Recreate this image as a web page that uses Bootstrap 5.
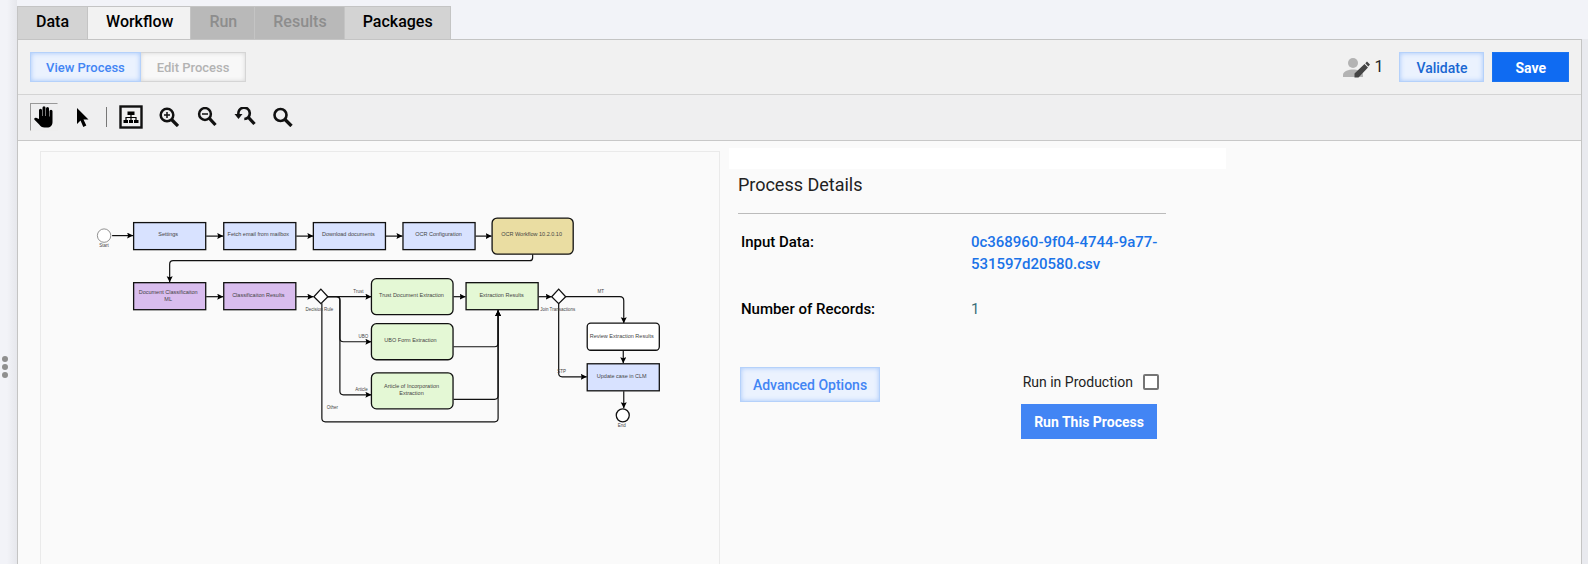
<!DOCTYPE html>
<html lang="en">
<head>
<meta charset="utf-8">
<meta name="viewport" content="width=device-width, initial-scale=1">
<title>Workflow</title>
<link href="https://cdn.jsdelivr.net/npm/bootstrap@5.3.0/dist/css/bootstrap.min.css" rel="stylesheet">
<script src="https://cdn.jsdelivr.net/npm/bootstrap@5.3.0/dist/js/bootstrap.bundle.min.js"></script>
<style>
body{font-family:Roboto,"Liberation Sans",sans-serif;background:#f2f3f8;color:#000;font-size:15px;line-height:22px}
.gutter{width:17px;background:linear-gradient(90deg,#f2f3f8 40%,#e6e7ec)}
.edge{width:6px;background:#e9eaef;margin-top:39px}
.grip{gap:2px;padding:356px 2px 0}
.grip span{width:6px;height:6px;border-radius:50%;background:#8f8f8f}
.mode-tabs{padding-top:6px}
.mode-tabs .nav-link{border:1px solid #c4c4c4;border-bottom:0;border-radius:0;background:#d3d3d3;color:#000;font-size:16px;font-weight:500;line-height:24px;padding:3px 18px 5px;height:33px}
.mode-tabs .nav-item+.nav-item .nav-link{border-left:0;padding:3px 17px 5px 18px}
.mode-tabs .nav-link.active{background:#f2f2f2;color:#000}
.mode-tabs .nav-link.disabled{background:#b9b9b9;color:#8d8d8d}
.workpanel{border:1px solid #c4c4c4;border-bottom:0;background:#fafafa}
.headbar{background:#f1f1f1;border-bottom:1px solid #d4d4d4;padding:12px}
.toolstrip{background:#efeff0;border-bottom:1px solid #c8c8c8;padding:8px 12px 9px;gap:10px}
.pbtn{border-radius:0;font-size:14px;font-weight:500;line-height:20px;padding:5px 16px 3px;height:30px;border:1px solid #b5d1fa;color:#4285f4;background:#ebf2fe;box-shadow:inset 0 0 5px #a5c7fb}
.seg .pbtn{font-size:13px;padding:5px 15px 3px}
.seg .pbtn:disabled{opacity:1;color:#b3b3b3;background:#f8f8f8;border-color:#d5d5d5;border-left:0;padding:5px 16px 3px;box-shadow:inset 0 0 4px #d5d5d5}
.pbtn.deep{color:#1967d2}
.pbtn.solid{background:#0f6bf2;border-color:#1a73f0;color:#fff;font-weight:700;box-shadow:none;padding:5px 22px 3px}
.pbtn.run{background:#4285f4;border-color:#4285f4;color:#fff;font-weight:700;box-shadow:none}
.pbtn.tall{height:35px;padding:7px 12px 6px}
.tool{width:28px;height:28px;border:1px solid transparent;background:none;padding:0;display:flex;align-items:center;justify-content:center}
.tool.on{border-color:#999 #eee #eee #999}
.sep{width:1px;height:20px;background:#777}
.canvas{width:43.5%;margin:10px 0 0 22px;border:1px solid #eaeaea;border-bottom:0}
.details{width:497px;margin:7px 0 0 9px}
.strip{height:21px;background:#fff}
.inner{width:428px;margin-left:9px}
.ptitle{font-size:18px;line-height:24px;font-weight:400;margin:4px 0 0;color:#222}
.inner hr{margin:16px 0 0;border-top:1px solid #bbb;opacity:1}
.facts{margin:17px 0 0 3px}
.facts dt{width:230px;font-weight:500}
.facts dd,.facts dt{margin-bottom:23px}
.facts dd{width:190px}
.facts a{color:#1a73e8;text-decoration:none;font-weight:500}
.facts .count{color:#3a6f78}
.actions{margin:24px 9px 0 2px}
.prod{gap:10px;height:30px;margin-bottom:7px;margin-right:-2px;font-size:14px;color:#222}
.prod input{width:16px;height:16px;margin:0;appearance:none;border:2px solid #757575;border-radius:2px;background:#fff}
.flow text{font-family:"Liberation Sans",sans-serif;font-size:11px;text-anchor:middle;fill:#444;stroke:none}
.flow .lb{font-size:9px}
.flow .nodes{stroke:#111;stroke-width:1.3}
.flow .wire{fill:none;stroke:#111;stroke-width:1.2}
</style>
</head>
<body class="d-flex min-vh-100">
<aside class="gutter flex-shrink-0"><div class="grip d-flex flex-column"><span></span><span></span><span></span></div></aside>
<main class="flex-grow-1 d-flex flex-column min-vh-100">
  <ul class="nav mode-tabs">
    <li class="nav-item"><a class="nav-link" href="#">Data</a></li>
    <li class="nav-item"><a class="nav-link active" href="#" aria-current="page">Workflow</a></li>
    <li class="nav-item"><a class="nav-link disabled" href="#" aria-disabled="true">Run</a></li>
    <li class="nav-item"><a class="nav-link disabled" href="#" aria-disabled="true">Results</a></li>
    <li class="nav-item"><a class="nav-link" href="#">Packages</a></li>
  </ul>
  <section class="workpanel flex-grow-1 d-flex flex-column">
    <div class="headbar d-flex align-items-center justify-content-between">
      <div class="seg d-flex"><button type="button" class="btn pbtn">View Process</button><button type="button" class="btn pbtn" disabled>Edit Process</button></div>
      <div class="d-flex align-items-center">
        <svg width="27" height="22" viewBox="0 0 27 22" class="me-1" aria-hidden="true"><circle cx="10" cy="7" r="5" fill="#b3b3b3"/><path d="M0 21v-2c0-4 6-5.500 10-5.500s10 1.500 10 5.500v2z" fill="#b3b3b3"/><path d="M11.500 21.500v-4L21.500 8l3.500 3.500L15.500 21.500zM22.300 7.200l1.700-1.700 3 3-1.700 1.900z" fill="#444"/></svg>
        <span class="fs-6 me-3 text-dark">1</span>
        <button type="button" class="btn pbtn deep">Validate</button>
        <button type="button" class="btn pbtn solid ms-2">Save</button>
      </div>
    </div>
    <div class="toolstrip d-flex align-items-center">
      <button type="button" class="tool on" aria-label="Pan"><svg width="22" height="24" viewBox="0 0 22 24" fill="#000"><path d="M6 14V5.200a1.500 1.500 0 0 1 3 0V11h.5V2.700a1.500 1.500 0 0 1 3 0V11h.5V3.500a1.500 1.500 0 0 1 3 0V11.500h.5V6.200a1.500 1.500 0 0 1 3 0V17c0 3.500-2 5.500-5.500 5.500h-2.500c-2.500 0-4-1-5.300-3L1.500 14.800c-.9-1.500.8-2.700 2.200-1.700z"/></svg></button>
      <button type="button" class="tool" aria-label="Select"><svg width="14" height="20" viewBox="0 0 14 20"><path d="M2 1v16l3.500-3.500L8.300 20l3-1.400-2.800-6H13.500z"/></svg></button>
      <span class="sep"></span>
      <button type="button" class="tool" aria-label="Fit diagram"><svg width="24" height="24" viewBox="0 0 24 24"><rect x="1.500" y="1.500" width="21" height="21" fill="none" stroke="#111" stroke-width="2.400"/><path d="M8.500 6.500h7v3.500h-7zM4.500 15h4.500v3H4.500zM10 15h4v3h-4zM15 15h4.500v3H15z"/><path d="M12 9v7M7 15v-2.500h10V15" fill="none" stroke="#000" stroke-width="1.200"/></svg></button>
      <button type="button" class="tool" aria-label="Zoom in"><svg width="20" height="20" viewBox="0 0 20 20" fill="none" stroke="#111"><circle cx="8" cy="8" r="6.300" stroke-width="2.500"/><path d="M12.500 12.500 19 19" stroke-width="3.300"/><path d="M8 5v6M5 8h6" stroke-width="1.500"/></svg></button>
      <button type="button" class="tool" aria-label="Zoom out"><svg width="20" height="20" viewBox="0 0 20 20" fill="none" stroke="#111"><circle cx="8" cy="7" r="5.900" stroke-width="2.500"/><path d="M12.500 11.500 18.500 18" stroke-width="3.300"/><path d="M5 7h6" stroke-width="1.500"/></svg></button>
      <button type="button" class="tool" aria-label="Reset zoom"><svg width="22" height="20" viewBox="0 0 22 20" fill="none" stroke="#111"><path d="M4.500 7.500A5.700 5.700 0 1 1 10.300 12" stroke-width="2.600"/><path d="M14.500 10.500 20.500 17" stroke-width="3.300"/><path d="M.5 7h8L4.500 12z" fill="#111" stroke="none"/></svg></button>
      <button type="button" class="tool" aria-label="Zoom"><svg width="20" height="20" viewBox="0 0 20 20" fill="none" stroke="#111"><circle cx="7.500" cy="8" r="6" stroke-width="2.600"/><path d="M12 12.500 18.500 19" stroke-width="3.300"/></svg></button>
    </div>
    <div class="d-flex flex-grow-1">
      <div class="canvas flex-shrink-0">
        <svg class="flow d-block w-100" viewBox="82 304 1354 600" role="img" aria-label="Process diagram">
          <defs><marker id="tip" markerUnits="userSpaceOnUse" markerWidth="8" markerHeight="8" refX="6" refY="3" orient="auto"><path d="M0 0 6 3 0 6 1 3z" fill="#000"/></marker></defs>
          <g transform="scale(2)">
          <g class="wire" marker-end="url(#tip)">
            <path d="M112 235.500H133"/><path d="M206 236H223"/><path d="M296 236H313"/><path d="M385 236H402"/><path d="M475 236H491"/>
            <path d="M532 254v3.500q0 3-3 3H173q-3.500 0-3.500 3.500V282"/>
            <path d="M206 296.500H223"/><path d="M296 296.500H313"/><path d="M327 296.500H371"/>
            <path d="M327 296.500H336q3.500 0 3.500 3.500V338q0 3.500 3.500 3.500H371"/>
            <path d="M327 296.500H336q3.500 0 3.500 3.500V391q0 3.500 3.500 3.500H371"/>
            <path d="M321.500 303V418q0 3.500 3.500 3.500H494q3.500 0 3.500-3.500V310"/>
            <path d="M453 346.500H494q3.500 0 3.500-3.500V310"/><path d="M453 399H494q3.500 0 3.500-3.500V310"/>
            <path d="M453 296.500H465"/><path d="M538 296.500H551"/>
            <path d="M565 296.500H619q4 0 4 4V323"/><path d="M558 303V373q0 3.500 3.500 3.500H586"/>
            <path d="M622.500 350V363"/><path d="M623 391V408"/>
          </g>
          <g class="nodes">
            <g fill="#d8e2ff"><rect x="133.500" y="222.500" width="72" height="27"/><rect x="223.500" y="222.500" width="72" height="27"/><rect x="313" y="222.500" width="72" height="27"/><rect x="402.500" y="222.500" width="72" height="27"/><rect x="586.500" y="363.500" width="72" height="27"/></g>
            <g fill="#d9bdee"><rect x="133.500" y="282.500" width="72" height="27"/><rect x="223.500" y="282.500" width="72" height="27"/></g>
            <rect x="491.500" y="218" width="81" height="36" rx="5" fill="#eadda2"/>
            <g fill="#e4f8d5"><rect x="371" y="278.500" width="81.500" height="36" rx="5"/><rect x="371" y="323.500" width="81.500" height="36" rx="5"/><rect x="371" y="372.500" width="81.500" height="36" rx="5"/><rect x="465.500" y="282.500" width="72" height="27"/></g>
            <g fill="#fff"><rect x="586.500" y="323" width="72" height="27" rx="3.500"/><path d="M320.500 289l7 7.500-7 7-7-7z"/><path d="M558 289l7 7.500-7 7-7-7z"/><circle cx="622" cy="415" r="6.500"/><circle cx="104" cy="235.500" r="6.700" stroke="#777" stroke-width=".8"/></g>
          </g>
          </g>
          <text x="336" y="472">Settings</text><text x="516" y="472">Fetch email from mailbox</text><text x="696" y="472">Download documents</text><text x="876" y="472">OCR Configuration</text><text x="1062" y="472">OCR Workflow 10.2.0.10</text>
          <text x="336" y="588">Document Classificaiton</text><text x="336" y="602">ML</text><text x="516" y="594">Classificaiton Results</text>
          <text x="822" y="594">Trust Document Extraction</text><text x="1002" y="594">Extraction Results</text>
          <text x="820" y="684">UBO Form Extraction</text><text x="822" y="776">Article of Incorporation</text><text x="822" y="790">Extraction</text>
          <text x="1242" y="676">Review Extraction Results</text><text x="1242" y="756">Update case in CLM</text>
          <text class="lb" x="208" y="494">Start</text><text class="lb" x="638" y="622">Decision Rule</text><text class="lb" x="716" y="586">Trust</text><text class="lb" x="726" y="676">UBO</text><text class="lb" x="722" y="782">Article</text><text class="lb" x="664" y="818">Other</text><text class="lb" x="1114" y="622">Join Transactions</text><text class="lb" x="1200" y="586">MT</text><text class="lb" x="1122" y="746">STP</text><text class="lb" x="1242" y="854">End</text>
        </svg>
      </div>
      <div class="details">
        <div class="strip"></div>
        <div class="inner">
          <h2 class="ptitle">Process Details</h2>
          <hr>
          <dl class="facts d-flex flex-wrap mb-0">
            <dt>Input Data:</dt><dd><a href="#">0c368960-9f04-4744-9a77-531597d20580.csv</a></dd>
            <dt>Number of Records:</dt><dd class="count">1</dd>
          </dl>
          <div class="actions d-flex justify-content-between align-items-start">
            <button type="button" class="btn pbtn tall">Advanced Options</button>
            <div class="d-flex flex-column align-items-end">
              <div class="prod d-flex align-items-center"><label for="prod">Run in Production</label><input type="checkbox" id="prod"></div>
              <button type="button" class="btn pbtn run tall">Run This Process</button>
            </div>
          </div>
        </div>
      </div>
    </div>
  </section>
</main>
<div class="edge flex-shrink-0"></div>
</body>
</html>
